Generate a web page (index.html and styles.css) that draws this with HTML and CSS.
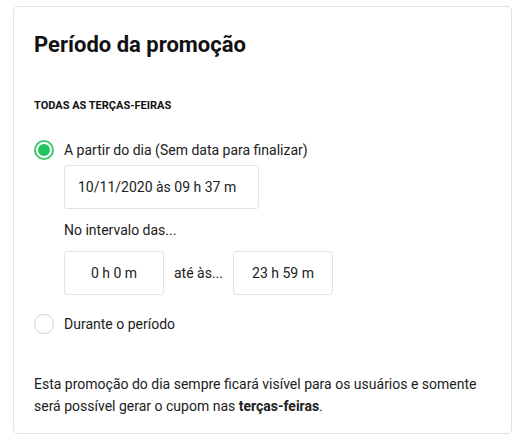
FILE: index.html
```html
<!DOCTYPE html>
<html>
  <head>
    <title>Período da promoção</title>
    <link rel="stylesheet" href="styles.css">
  </head>
  <body>
    <div class="card">
      <h1 class="title">Período da promoção</h1>
      <h2 class="subtitle">TODAS AS TERÇAS-FEIRAS</h2>

      <div class="option">
        <span class="radio checked"></span>
        <span class="option-label">A partir do dia (Sem data para finalizar)</span>
      </div>
      <div class="option-body">
        <div class="field field-date">10/11/2020 às 09 h 37 m</div>
        <p class="hint">No intervalo das...</p>
        <div class="range">
          <div class="field field-time">0 h 0 m</div>
          <span class="range-sep">até às...</span>
          <div class="field field-time">23 h 59 m</div>
        </div>
      </div>

      <div class="option">
        <span class="radio"></span>
        <span class="option-label">Durante o período</span>
      </div>

      <p class="note">Esta promoção do dia sempre ficará visível para os usuários e somente será possível gerar o cupom nas <b>terças-feiras</b>.</p>
    </div>
  </body>
</html>
```

FILE: styles.css
```css
body {
  margin: 0;
  padding: 6px 0 0 13px;
  font-family: Roboto, "Liberation Sans", sans-serif;
  font-size: 14px;
  color: #212121;
  background: #fff;
}

.card {
  width: 457px;
  height: 386px;
  padding: 20px;
  border: 1px solid #e0e0e0;
  border-radius: 5px;
}

.title {
  margin: 3px 0 0 0;
  font-size: 22px;
  font-weight: 700;
  color: #111;
  line-height: 30px;
}

.subtitle {
  margin: 38px 0 0 0;
  font-size: 11px;
  font-weight: 700;
  line-height: 16px;
  color: #111;
}

.option {
  display: flex;
  align-items: center;
  gap: 10px;
  margin-top: 26px;
}

.option-body + .option {
  margin-top: 19px;
}

.radio {
  box-sizing: border-box;
  width: 20px;
  height: 20px;
  border: 1px solid #cfcfcf;
  border-radius: 50%;
  display: flex;
  align-items: center;
  justify-content: center;
}

.radio.checked {
  border: 2px solid #3ccb6f;
}

.radio.checked::after {
  content: "";
  width: 12px;
  height: 12px;
  border-radius: 50%;
  background: #21c65e;
}

.option-label {
  line-height: 20px;
}

.option-body {
  padding-left: 30px;
  margin-top: 5px;
}

.field {
  box-sizing: border-box;
  height: 44px;
  border: 1px solid #e3e3e3;
  border-radius: 3px;
  display: flex;
  align-items: center;
  justify-content: center;
}

.field-date {
  width: 195px;
  justify-content: flex-start;
  padding-left: 13px;
}

.field-time {
  width: 100px;
}

.hint {
  margin: 12px 0 0 0;
  line-height: 18px;
}

.range {
  display: flex;
  align-items: center;
  gap: 10px;
  margin-top: 12px;
}

.note {
  margin: 39px 0 0 0;
  line-height: 22px;
}

.note b {
  font-weight: 700;
}
```
